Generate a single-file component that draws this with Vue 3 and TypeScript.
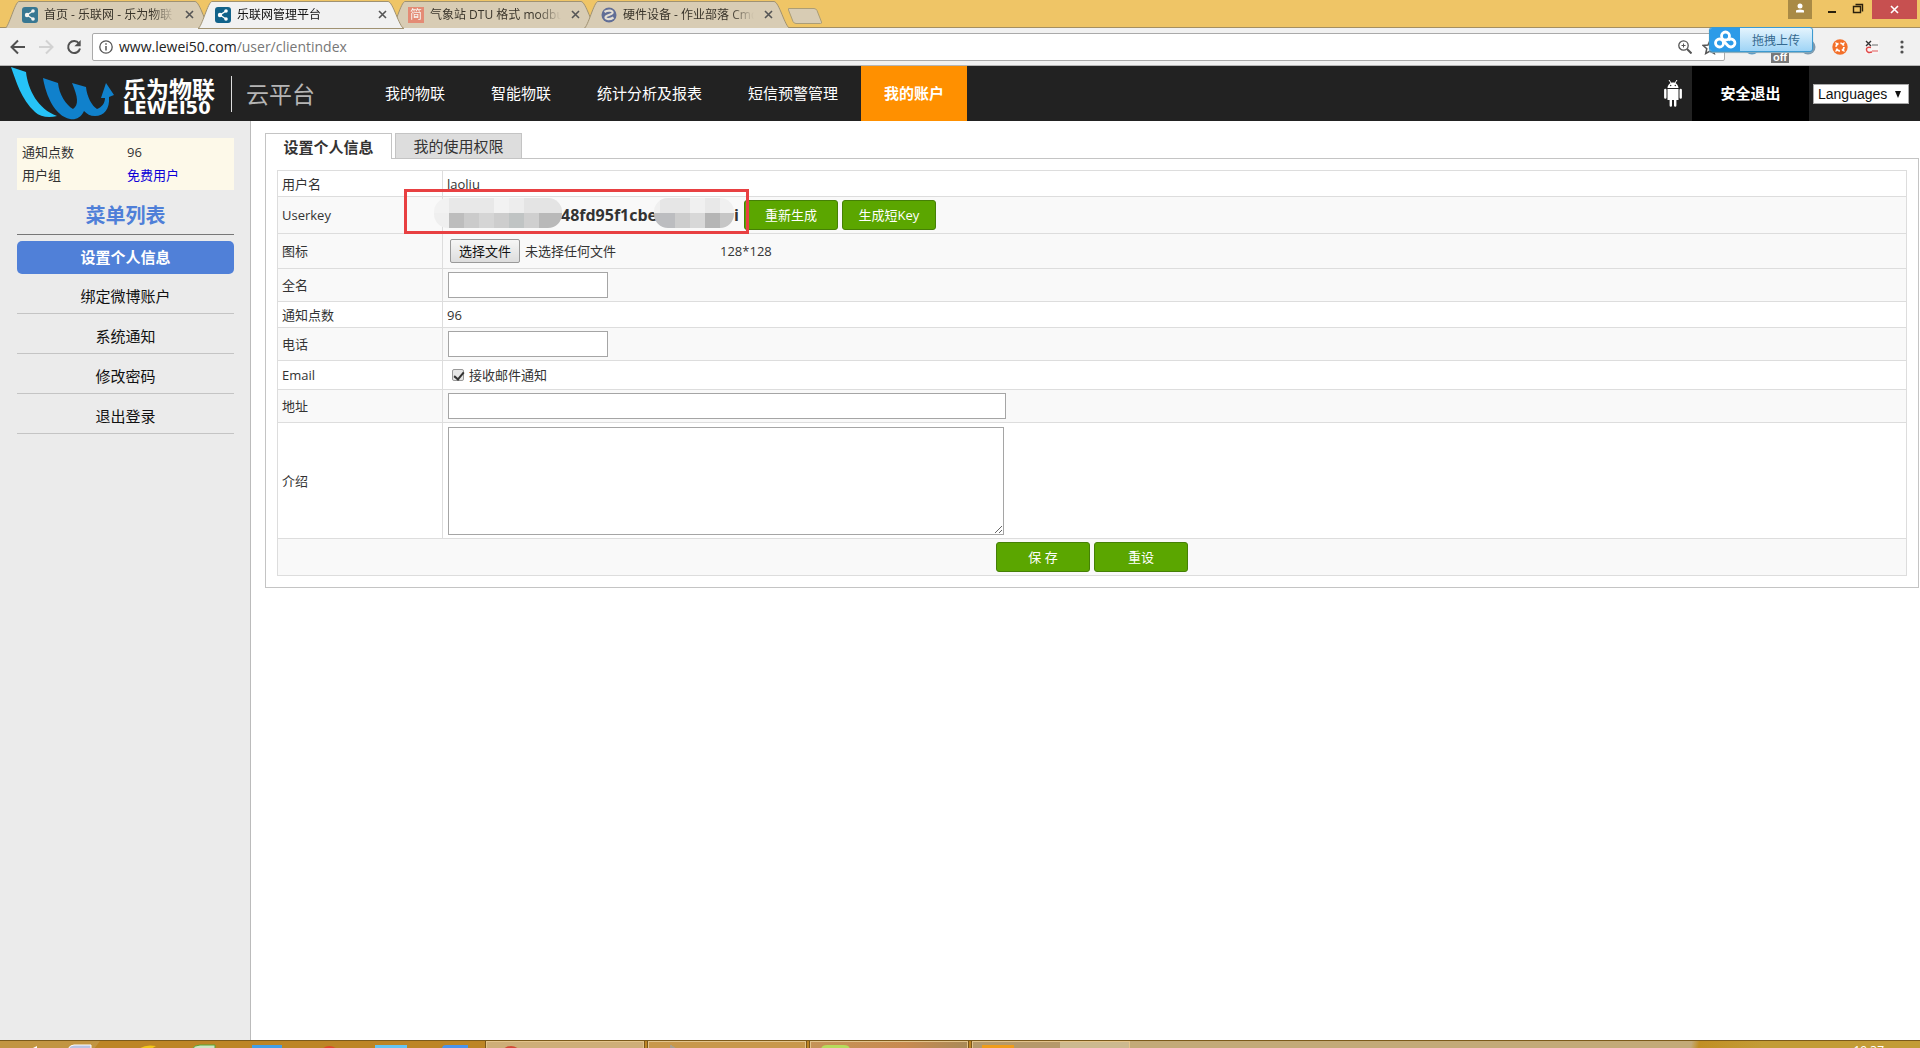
<script setup lang="ts">
import { ref } from 'vue'

interface BrowserTab {
  title: string
  icon: 'share' | 'jian' | 'cmd'
  active?: boolean
}

const tabs: BrowserTab[] = [
  { title: '首页 - 乐联网 - 乐为物联', icon: 'share' },
  { title: '乐联网管理平台', icon: 'share', active: true },
  { title: '气象站 DTU 格式 modbus', icon: 'jian' },
  { title: '硬件设备 - 作业部落 Cmd', icon: 'cmd' },
]

const nav: string[] = ['我的物联', '智能物联', '统计分析及报表', '短信预警管理', '我的账户']
const currentNav = '我的账户'

const menu: string[] = ['设置个人信息', '绑定微博账户', '系统通知', '修改密码', '退出登录']
const currentMenu = '设置个人信息'

const fullName = ref('')
const phone = ref('')
const address = ref('')
const intro = ref('')
const acceptMail = ref(true)
</script>

<template>
  <div class="screen">
    <div class="tabstrip">
      <div class="tabs">
        <div v-for="t in tabs" :key="t.title" class="tab" :class="{ active: t.active }">
          <svg class="tab-shape" viewBox="0 0 206 29" aria-hidden="true">
            <path d="M0 28.500C4 27 10 1.500 14 1.500H190C195 1.500 201 27 206 28.500Z" />
          </svg>
          <svg v-if="t.icon === 'share'" class="fav" viewBox="0 0 16 16" aria-hidden="true">
            <rect width="16" height="16" rx="3" fill="#11628a" />
            <path d="M11 4L5 8l6 4" stroke="#fff" stroke-width="1.300" fill="none" />
            <circle cx="11" cy="4" r="1.800" fill="#fff" /><circle cx="5" cy="8" r="2.200" fill="#fff" /><circle cx="11" cy="12" r="1.800" fill="#fff" />
          </svg>
          <span v-else-if="t.icon === 'jian'" class="fav jian">简</span>
          <svg v-else class="fav" viewBox="0 0 16 16" aria-hidden="true">
            <circle cx="8" cy="8" r="7.500" fill="#44578f" />
            <path d="M3.500 5C7 2.500 12.500 3.500 11.500 6C10.500 8 5 8 4.500 10C4 12.500 9 13 12.500 10.500" stroke="#e8e4dc" stroke-width="2.200" fill="none" />
          </svg>
          <span class="tab-title">{{ t.title }}</span>
          <button class="tab-close" type="button" aria-label="关闭标签页">
            <svg viewBox="0 0 9 9"><path d="M1 1l7 7M8 1l-7 7" stroke="#555" stroke-width="1.600" /></svg>
          </button>
        </div>
        <button class="newtab" type="button" aria-label="新标签页">
          <svg viewBox="0 0 36 18"><path d="M1.500 1.500H27Q29 1.500 30 3.500L34.500 15Q35 16.500 33.500 16.500H9Q7 16.500 6 14.500L1.500 3Z" fill="#d8ccb4" stroke="#ab9d76" /></svg>
        </button>
      </div>
      <div class="window-buttons">
        <button class="user-button" type="button" aria-label="用户">
          <svg viewBox="0 0 24 19"><circle cx="12" cy="6" r="2.500" fill="#fff" /><path d="M8 12.500V11q0-1.500 4-1.500t4 1.500v1.500z" fill="#fff" /></svg>
        </button>
        <button class="min-button" type="button" aria-label="最小化">
          <svg viewBox="0 0 28 19"><path d="M10 12h8" stroke="#2a200c" stroke-width="2" /></svg>
        </button>
        <button class="max-button" type="button" aria-label="还原">
          <svg viewBox="0 0 26 19"><path d="M7.500 6.500h7v6h-7zM9.500 4.500h7v7" fill="none" stroke="#2a200c" stroke-width="1.400" /></svg>
        </button>
        <button class="close-button" type="button" aria-label="关闭">
          <svg viewBox="0 0 45 19"><path d="M19 6l7 7M26 6l-7 7" stroke="#fff" stroke-width="1.600" /></svg>
        </button>
      </div>
    </div>

    <div class="toolbar">
      <button class="tool" type="button" aria-label="后退">
        <svg viewBox="0 0 16 16"><path d="M15 8H2M8 1.500L1.500 8 8 14.500" fill="none" stroke="#505050" stroke-width="2" /></svg>
      </button>
      <button class="tool" type="button" aria-label="前进">
        <svg viewBox="0 0 16 16"><path d="M1 8h13M8 1.500L14.500 8 8 14.500" fill="none" stroke="#d2d2d2" stroke-width="2" /></svg>
      </button>
      <button class="tool" type="button" aria-label="刷新">
        <svg viewBox="0 0 16 16"><path d="M13 4.500A6 6 0 1 0 14 9.500" fill="none" stroke="#505050" stroke-width="2" /><path d="M14.700 1v6.300H8.400z" fill="#505050" /></svg>
      </button>
      <div class="address">
        <svg class="info" viewBox="0 0 14 14" aria-hidden="true"><circle cx="7" cy="7" r="6.200" fill="none" stroke="#555" stroke-width="1.300" /><path d="M7 6v4.500M7 3.200v1.600" stroke="#555" stroke-width="1.500" /></svg>
        <div class="url"><b>www.lewei50.com</b>/user/clientindex</div>
        <svg class="mag" viewBox="0 0 14 14" aria-hidden="true"><circle cx="5.500" cy="5.500" r="4.700" fill="none" stroke="#555" stroke-width="1.300" /><path d="M9 9l4.500 4.500" stroke="#555" stroke-width="2" /><path d="M3.500 5.500h4M5.500 3.500v4" stroke="#555" /></svg>
        <svg class="star" viewBox="0 0 16 16" aria-hidden="true"><path d="M8 1.500l2 4.500 4.800.500-3.600 3.200 1.100 4.800L8 12l-4.300 2.500 1.100-4.800L1.200 6.500 6 6z" fill="none" stroke="#555" stroke-width="1.500" /></svg>
      </div>
      <div class="extensions">
        <svg class="ext" viewBox="0 0 16 16" aria-hidden="true"><circle cx="8" cy="8" r="7.500" fill="#5c9bc4" /></svg>
        <span class="off">off</span>
        <svg class="ext" viewBox="0 0 16 16" aria-hidden="true"><circle cx="8" cy="8" r="7.500" fill="#7e98ad" /></svg>
        <svg class="ext" viewBox="0 0 16 16" aria-hidden="true">
          <circle cx="8" cy="8" r="7.700" fill="#f3702a" />
          <circle cx="8" cy="8" r="4" fill="none" stroke="#fff" stroke-width="1.800" stroke-dasharray="4.200 2.080" />
          <path d="M3.500 3.500L5 5M12.500 3.500L11 5M3.500 12.500L5 11M12.500 12.500L11 11" stroke="#fff" stroke-width="1.200" />
        </svg>
        <svg class="ext" viewBox="0 0 16 16" aria-hidden="true"><rect x="1" y="1" width="14" height="14" fill="#f8f4f4" /><path d="M2 2l5 5M7 2L2 7" stroke="#333" stroke-width="1.400" /><path d="M8 6h6" stroke="#999" stroke-width="1.500" /><path d="M7 8.500Q2 7.500 2.500 11T8 13" stroke="#e04848" stroke-width="1.500" fill="none" /><path d="M8 12h6" stroke="#ea8c8c" stroke-width="1.500" /></svg>
        <svg class="dots" viewBox="0 0 4 14" aria-hidden="true"><circle cx="2" cy="2" r="1.600" fill="#505050" /><circle cx="2" cy="7" r="1.600" fill="#505050" /><circle cx="2" cy="12" r="1.600" fill="#505050" /></svg>
      </div>
      <button class="upload" type="button">
        <svg viewBox="0 0 30 25" aria-hidden="true">
          <g fill="none" stroke="#fff" stroke-width="2.800"><circle cx="15.500" cy="8" r="4" /><circle cx="9.500" cy="15" r="4" /><path d="M18 12.300a4 4 0 1 1 0 5.400L12.500 12" /></g>
        </svg>
        <span>拖拽上传</span>
      </button>
    </div>

    <header class="site-header">
      <div class="brand">
        <svg class="logo" viewBox="0 0 104 53" aria-hidden="true">
          <path d="M0 0L15 5C17 23 27 42 46 49C38 51 29 50 24 45C10 32 5 14 0 0Z" fill="#26c3f7" />
          <path d="M32 11L47 16C48 27 55 38 62 42C68 38 67 30 61 16L75 20C76 30 81 39 86 42C91 40 94 36 94 31L90 31L95 16L103 28L98 30C99 42 93 49 84 49C79 49 76 47 73 44C70 51 64 53 59 52C44 49 35 29 32 11Z" fill="#1081cc" />
        </svg>
        <div class="brand-name">
          <span class="brand-cn">乐为物联</span>
          <span class="brand-en">LEWEI50</span>
        </div>
        <span class="brand-sub">云平台</span>
      </div>
      <nav class="nav">
        <a v-for="n in nav" :key="n" href="#" :class="{ current: n === currentNav }">{{ n }}</a>
      </nav>
      <svg class="android" viewBox="0 0 18 27" aria-hidden="true">
        <path d="M5 0l2 3M13 0l-2 3" stroke="#fff" />
        <path d="M3.500 8C4 0.500 14 0.500 14.500 8zM3.500 9h11v11h-11z" fill="#fff" />
        <path d="M1.300 10v7.500M16.700 10v7.500M6.800 19v6.500M11.200 19v6.500" stroke="#fff" stroke-width="2.400" stroke-linecap="round" />
        <circle cx="6.700" cy="5.500" r=".700" fill="#222" /><circle cx="11.300" cy="5.500" r=".700" fill="#222" />
      </svg>
      <a class="logout" href="#">安全退出</a>
      <div class="lang">
        <select aria-label="Languages"><option>Languages</option></select>
        <svg class="lang-arrow" viewBox="0 0 6 7" aria-hidden="true"><path d="M0 0h6L3 7z" fill="#111" /></svg>
      </div>
    </header>

    <div class="body">
      <aside class="sidebar">
        <dl class="info-box">
          <dt>通知点数</dt><dd>96</dd>
          <dt>用户组</dt><dd><a href="#">免费用户</a></dd>
        </dl>
        <h2>菜单列表</h2>
        <ul class="menu">
          <li v-for="m in menu" :key="m"><a href="#" :class="{ current: m === currentMenu }">{{ m }}</a></li>
        </ul>
      </aside>

      <main class="content">
        <div class="panel-tabs">
          <button class="panel-tab selected" type="button">设置个人信息</button>
          <button class="panel-tab" type="button">我的使用权限</button>
        </div>
        <form class="panel" @submit.prevent>
          <table>
            <tbody>
              <tr class="plain"><th>用户名</th><td>laoliu</td></tr>
              <tr class="action striped">
                <th>Userkey</th>
                <td class="key-cell">
                  <div class="key-row">
                    <div class="key">
                      <span>48fd95f1cbe</span><span>i</span>
                      <svg class="mosaic first" viewBox="0 0 128 30" aria-hidden="true">
                        <clipPath id="m1"><rect width="128" height="30" rx="14" /></clipPath>
                        <g clip-path="url(#m1)">
                          <path d="M0 0h128v15H0z" fill="#f2f2f2" /><path d="M15 0h45v15H15z" fill="#e8e8e8" /><path d="M75 0h15v15H75z" fill="#ededed" /><path d="M90 0h38v15H90z" fill="#e4e4e4" />
                          <path d="M0 15h15v15H0z" fill="#efefef" /><path d="M15 15h15v15H15z" fill="#bdbdbd" /><path d="M30 15h15v15H30z" fill="#cbcbcb" /><path d="M45 15h15v15H45z" fill="#d5d5d5" /><path d="M60 15h15v15H60z" fill="#cdcdcd" /><path d="M75 15h15v15H75z" fill="#c0c4c4" /><path d="M90 15h15v15H90z" fill="#cfcfcf" /><path d="M105 15h23v15h-23z" fill="#b9b9b9" />
                        </g>
                      </svg>
                      <svg class="mosaic second" viewBox="0 0 80 30" aria-hidden="true">
                        <clipPath id="m2"><rect width="80" height="30" rx="14" /></clipPath>
                        <g clip-path="url(#m2)">
                          <path d="M0 0h80v15H0z" fill="#f0f0f0" /><path d="M6 0h30v15H6z" fill="#e6e6e6" /><path d="M51 0h15v15H51z" fill="#e8e8e8" />
                          <path d="M0 15h21v15H0z" fill="#bcbdc0" /><path d="M21 15h15v15H21z" fill="#cdcdcd" /><path d="M36 15h15v15H36z" fill="#d8d8d8" /><path d="M51 15h15v15H51z" fill="#b5b5b5" /><path d="M66 15h14v15H66z" fill="#c6c6c6" />
                        </g>
                      </svg>
                    </div>
                    <button class="green" type="button">重新生成</button>
                    <button class="green" type="button">生成短Key</button>
                  </div>
                  <span class="highlight"></span>
                </td>
              </tr>
              <tr class="file striped">
                <th>图标</th>
                <td>
                  <div class="file-row">
                    <button class="file-button" type="button">选择文件</button>
                    <span class="file-name">未选择任何文件</span>
                    <span>128*128</span>
                  </div>
                </td>
              </tr>
              <tr class="field striped"><th><label for="name">全名</label></th><td><input id="name" v-model="fullName" class="short" type="text"></td></tr>
              <tr class="plain"><th>通知点数</th><td>96</td></tr>
              <tr class="field striped"><th><label for="phone">电话</label></th><td><input id="phone" v-model="phone" class="short" type="text"></td></tr>
              <tr class="mail"><th>Email</th><td><label class="check"><input v-model="acceptMail" type="checkbox">接收邮件通知</label></td></tr>
              <tr class="field striped"><th><label for="address">地址</label></th><td><input id="address" v-model="address" class="long" type="text"></td></tr>
              <tr class="area"><th><label for="intro">介绍</label></th><td><textarea id="intro" v-model="intro"></textarea></td></tr>
              <tr class="action striped">
                <td colspan="2">
                  <div class="form-buttons">
                    <button class="green" type="submit">保 存</button>
                    <button class="green" type="reset">重设</button>
                  </div>
                </td>
              </tr>
            </tbody>
          </table>
        </form>
      </main>
    </div>

    <footer class="taskbar">
      <svg class="pinned" viewBox="0 0 486 8" aria-hidden="true">
        <path d="M0 0H100L94 8H0z" fill="#c29542" />
        <path d="M31 8l6-3v3z" fill="#fff" /><path d="M68 8q2-4 6-4h17v4z" fill="#b9c3e4" stroke="#fff" />
        <path d="M139 8q6-5 17-3l-5 3z" fill="#f2c619" /><path d="M192 8q3-4 8-4h15v4z" fill="#cfe6c4" stroke="#59a637" />
        <path d="M252 4h30v4h-30z" fill="#429fe8" /><path d="M322 8q7-6 15 0z" fill="#e0492a" />
        <path d="M375 4h32v4h-32z" fill="#65c5f4" /><path d="M442 8q0-4 4-4h22v4z" fill="#4a94ee" />
      </svg>
      <div class="task light"><svg viewBox="0 0 60 8" aria-hidden="true"><path d="M15 8q9-8 18 0z" fill="#d34936" /></svg></div>
      <div class="task"><svg viewBox="0 0 60 8" aria-hidden="true"><path d="M22 3v5M22 4l6 4" stroke="#a9a08c" fill="none" stroke-width="2" /></svg></div>
      <div class="task warm"><svg viewBox="0 0 60 8" aria-hidden="true"><path d="M10 8q0-5 6-5h17q6 0 6 5z" fill="#b6dc5c" /></svg></div>
      <div class="task dim"><svg viewBox="0 0 60 8" aria-hidden="true"><path d="M9 3h32v5H9z" fill="#ef9c1b" /></svg></div>
      <div class="tray"><span>19:37</span></div>
    </footer>
  </div>
</template>

<style>
body { margin: 0; background: #fff; }
</style>

<style scoped>
* { box-sizing: border-box; }
.screen { display: flex; flex-direction: column; min-height: 100vh; font: 13px/20px "Open Sans", "Noto Sans CJK SC", sans-serif; color: #333; }
button { padding: 0; border: 0; background: none; font: inherit; color: inherit; }
a { text-decoration: none; color: inherit; }
svg { display: block; flex: none; }

.tabstrip { display: flex; justify-content: space-between; height: 28px; padding: 0 3px 0 5px; background: #efc566; border-bottom: 1px solid #a58f60; }
.tabs { display: flex; align-items: flex-start; }
.tab { position: relative; display: flex; align-items: center; width: 206px; height: 29px; margin-right: -13px; padding: 0 17px; font-size: 12px; color: #3a352b; isolation: isolate; }
.tab.active { z-index: 2; color: #111; }
.tab-shape { position: absolute; left: 0; top: 0; width: 206px; height: 29px; z-index: -1; fill: #d8ccb4; stroke: #a09272; }
.active .tab-shape { fill: #f1f1f1; }
.fav { width: 16px; height: 16px; margin-right: 6px; opacity: 0.8; }
.active .fav { opacity: 1; }
.jian { background: #e87c66; color: #fff; font-size: 12px; line-height: 16px; text-align: center; }
.tab-title { flex: 1; overflow: hidden; white-space: nowrap; mask-image: linear-gradient(90deg, #000 82%, transparent); }
.tab-close { width: 9px; margin: 0 0 0 10px; }
.newtab { width: 36px; height: 18px; margin: 7px 0 0 10px; }
.window-buttons { display: flex; height: 19px; }
.window-buttons button { height: 19px; }
.window-buttons svg { height: 19px; }
.user-button { width: 24px; margin-right: 6px; background: #a98a45; }
.min-button { width: 28px; }
.max-button { width: 26px; }
.close-button { width: 45px; background: #c75050; }

.toolbar { position: relative; display: flex; align-items: center; height: 38px; padding: 0 16px 0 10px; background: #f1f1f1; border-bottom: 1px solid #b6b6b6; }
.tool { width: 16px; margin-right: 12px; }
.address { display: flex; flex: 1; align-items: center; height: 28px; margin-left: -2px; padding: 0 6px; background: #fff; border: 1px solid #aaa; border-radius: 2px; }
.info { width: 14px; height: 14px; margin-right: 6px; }
.url { flex: 1; font-size: 14px; color: #777; }
.url b { font-weight: 400; color: #222; }
.mag { width: 14px; height: 14px; margin-right: 10px; }
.star { width: 16px; height: 16px; }
.extensions { display: flex; align-items: center; gap: 16px; margin-left: 19px; }
.ext { width: 16px; height: 16px; }
.off { align-self: flex-end; height: 10px; margin: 0 -5px; padding: 0 2px; background: #777; color: #fff; font: bold 11px/8px "Liberation Sans", sans-serif; position: relative; top: 8px; }
.dots { width: 4px; height: 14px; margin-left: 4px; }
.upload { position: absolute; right: 107px; top: -1px; display: flex; width: 104px; height: 25px; overflow: hidden; border: 1px solid #3c9ad0; border-radius: 3px; background: linear-gradient(#e4f4fd, #9fd4f6); color: #35698f; line-height: 25px; box-shadow: 0 1px 1px #8ab; }
.upload svg { width: 30px; height: 25px; background: #2d9be8; }
.upload span { flex: 1; font-size: 12px; }

.site-header { display: flex; align-items: center; height: 55px; background: #222; color: #fff; font-size: 15px; }
.brand { display: flex; align-items: center; width: 362px; height: 55px; padding-left: 11px; }
.logo { width: 104px; height: 53px; }
.brand-name { display: flex; flex-direction: column; gap: 2px; width: 117px; height: 36px; padding: 2px 0 0 8px; border-right: 1px solid #ddd; }
.brand-cn { font: 700 23px/20px "Noto Sans CJK SC", sans-serif; }
.brand-en { font: bold 18px/16px "DejaVu Sans", sans-serif; }
.brand-sub { margin-left: 14px; font-size: 23px; color: #b5b5b5; }
.nav { display: flex; flex: 1; height: 55px; line-height: 55px; }
.nav a { padding: 0 23px; white-space: nowrap; }
.nav .current { background: #ff9000; font-weight: 700; }
.android { width: 18px; height: 27px; margin-right: 10px; }
.logout { width: 117px; background: #000; font-weight: 700; line-height: 55px; text-align: center; }
.lang { position: relative; width: 111px; padding-left: 4px; }
.lang select { display: block; width: 96px; height: 20px; padding: 0 4px; appearance: none; background: #fff; border: 1px solid #aaa; border-radius: 0; color: #111; font: 14px "Liberation Sans", Arial, sans-serif; }
.lang-arrow { position: absolute; right: 19px; top: 7px; width: 6px; height: 7px; pointer-events: none; }

.body { display: flex; flex: 1; }
.sidebar { width: 251px; padding: 17px 16px 0 17px; background: #ebebeb; border-right: 1px solid #bbb; }
.info-box { display: grid; grid-template-columns: 105px 1fr; margin: 0; padding: 3px 5px; background: #fdf9e9; line-height: 23px; }
.info-box dd { margin: 0; }
.info-box a { color: #0d00d8; }
.sidebar h2 { margin: 0 0 6px; padding: 9px 0 1px; border-bottom: 1px solid #777; color: #4f7fd8; font-size: 20px; line-height: 34px; text-align: center; }
.menu { margin: 0; padding: 0; list-style: none; font-size: 15px; text-align: center; color: #111; }
.menu a { display: block; height: 40px; padding-top: 4px; border-bottom: 1px solid #c4c4c4; line-height: 36px; }
.menu .current { height: 33px; padding: 0; border: 0; border-radius: 5px; background: #5080d8; color: #fff; font-weight: 700; line-height: 33px; }

.content { flex: 1; padding: 12px 1px 0 14px; }
.panel-tabs { position: relative; display: flex; gap: 3px; }
.panel-tab { width: 127px; height: 25px; border: 1px solid #c4c4c4; border-bottom: 0; background: #ddd; font-size: 15px; line-height: 22px; }
.panel-tab.selected { height: 26px; margin-bottom: -1px; background: #fff; font-weight: 700; }
.panel { padding: 11px; border: 1px solid #c4c4c4; }
table { width: 100%; border-collapse: collapse; table-layout: fixed; }
th, td { padding: 0 4px; border: 1px solid #ddd; text-align: left; font-weight: 400; vertical-align: middle; }
th { width: 165px; }
.striped { background: #f9f9f9; }
.plain { height: 26px; }
.action { height: 37px; }
.file { height: 35px; }
.field { height: 33px; }
.mail { height: 29px; }
.area { height: 116px; }
.key-cell { position: relative; }
.key-row { display: flex; align-items: center; gap: 4px; }
.key { position: relative; display: flex; justify-content: space-between; width: 293px; padding: 0 1px 0 114px; font-size: 16px; font-weight: 700; }
.mosaic { position: absolute; top: -7px; height: 30px; }
.first { left: -13px; width: 128px; }
.second { left: 207px; width: 80px; }
.highlight { position: absolute; left: -39px; top: -8px; width: 345px; height: 45px; border: 3px solid #e84042; }
.green { width: 94px; height: 30px; border: 1px solid #458006; border-radius: 3px; background: #5ba600; color: #fff; }
.file-row { display: flex; align-items: center; padding-left: 3px; }
.file-button { width: 70px; height: 24px; margin-right: 5px; border: 1px solid #999; border-radius: 2px; background: linear-gradient(#f6f6f6, #ddd); color: #111; }
.file-name { width: 195px; }
input[type="text"], textarea { display: block; border: 1px solid #a5a5a5; background: #fff; margin: 0 0 0 1px; font: inherit; }
.short { width: 160px; height: 26px; }
.long { width: 558px; height: 26px; }
textarea { width: 556px; height: 108px; }
.check { display: flex; align-items: center; }
.check input { appearance: none; position: relative; width: 12px; height: 12px; margin: 0 5px; border: 1px solid #999; border-radius: 2px; background: #e6e6e6; }
.check input:checked::after { content: ""; position: absolute; left: 3px; top: 0; width: 4px; height: 8px; border: solid #333; border-width: 0 2px 2px 0; transform: rotate(40deg); }
.form-buttons { display: flex; justify-content: center; gap: 4px; }

.taskbar { display: flex; height: 8px; overflow: hidden; border-top: 1px solid #7b5a1c; background: #bd8525; }
.pinned { width: 486px; height: 8px; }
.task { width: 158px; height: 10px; margin-right: 4px; border: 1px solid #e3c48b; outline: 1px solid #79561a; background: #c8984c; }
.task svg { width: 60px; height: 8px; }
.light { background: #ceae78; }
.warm { background: linear-gradient(90deg, #c59357, #c88a50 60%, #a98a58); }
.dim { margin: 0; background: linear-gradient(90deg, #b5996a 56%, #ccb98f 56%); }
.tray { display: flex; flex: 1; justify-content: flex-end; padding-right: 36px; background: linear-gradient(100deg, #c3aa78 71%, #c18f24 72%, #c39c36 80%); color: #fff; font-size: 12px; line-height: 20px; }
</style>
